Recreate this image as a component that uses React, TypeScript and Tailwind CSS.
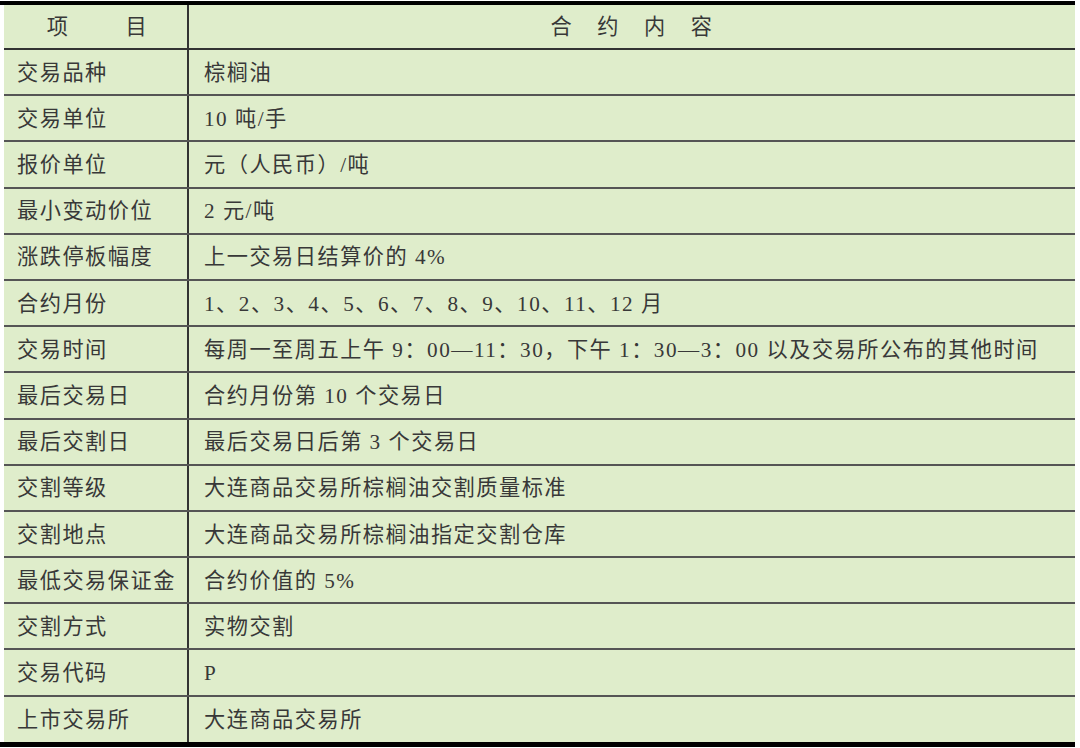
const rows: [string, string][] = [
  ["交易品种", "棕榈油"],
  ["交易单位", "10 吨/手"],
  ["报价单位", "元（人民币）/吨"],
  ["最小变动价位", "2 元/吨"],
  ["涨跌停板幅度", "上一交易日结算价的 4%"],
  ["合约月份", "1、2、3、4、5、6、7、8、9、10、11、12 月"],
  ["交易时间", "每周一至周五上午 9：00—11：30，下午 1：30—3：00 以及交易所公布的其他时间"],
  ["最后交易日", "合约月份第 10 个交易日"],
  ["最后交割日", "最后交易日后第 3 个交易日"],
  ["交割等级", "大连商品交易所棕榈油交割质量标准"],
  ["交割地点", "大连商品交易所棕榈油指定交割仓库"],
  ["最低交易保证金", "合约价值的 5%"],
  ["交割方式", "实物交割"],
  ["交易代码", "P"],
  ["上市交易所", "大连商品交易所"],
];

const App = () => {
  return (
    <div
      className="w-[1080px] h-[748px] bg-white pt-[1px] text-[21.2px] text-[#383838] tracking-[1.5px]"
      style={{ fontFamily: '"Liberation Serif", "Noto Sans CJK SC", serif' }}
    >
      <div className="w-[1075px] h-[4px] bg-black" />
      <div className="ml-[4px] w-[1071px] bg-[#dfedcb]">
        <div className="grid grid-cols-[185px_1fr] h-[45px] border-b-2 border-[#333]">
          <div className="flex items-center justify-center gap-[56px] border-r-2 border-[#333] pt-[3px] pl-[4px]">
            <span>项</span>
            <span>目</span>
          </div>
          <div className="flex items-center justify-center gap-[24px] pt-[3px]">
            <span>合</span>
            <span>约</span>
            <span>内</span>
            <span>容</span>
          </div>
        </div>
        {rows.map(([k, v], i) => (
          <div
            key={k}
            className={
              i === rows.length - 1
                ? "grid grid-cols-[185px_1fr] h-[45px]"
                : "grid grid-cols-[185px_1fr] h-[46.2px] border-b-2 border-[#555]"
            }
          >
            <div className="flex items-center pl-[13px] pt-[3px] border-r-2 border-[#333]">{k}</div>
            <div className="flex items-center pl-[15px] pt-[3px] whitespace-nowrap">{v}</div>
          </div>
        ))}
      </div>
      <div className="w-[1075px] h-[5px] bg-black" />
    </div>
  );
};

export default App;
